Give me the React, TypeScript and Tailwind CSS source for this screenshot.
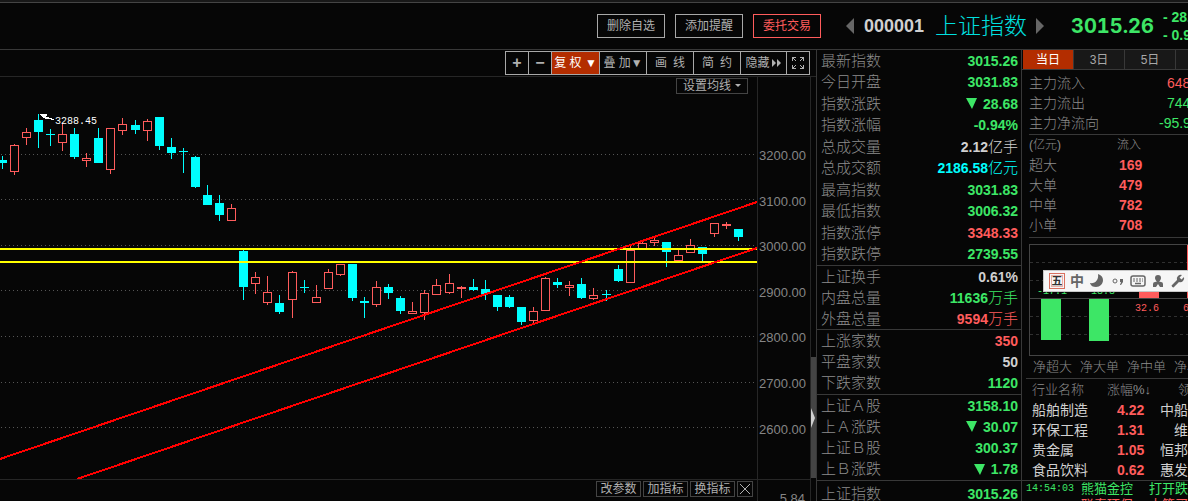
import React, { useState } from 'react';

type Candle = [up: boolean, top: number, bottom: number, high: number, low: number];

const candles: Candle[] = [
  [false, 160, 163, 156, 169],
  [true, 145, 172, 144, 175],
  [true, 132, 138, 128, 145],
  [false, 120, 132, 114, 148],
  [false, 134, 135, 129, 146],
  [true, 134, 143, 123, 151],
  [false, 134, 157, 128, 159],
  [true, 158, 161, 153, 167],
  [false, 138, 163, 128, 163],
  [true, 128, 170, 128, 174],
  [true, 124, 131, 118, 135],
  [false, 125, 130, 120, 134],
  [true, 121, 131, 119, 141],
  [false, 117, 146, 117, 150],
  [false, 147, 153, 138, 159],
  [false, 151, 152, 148, 173],
  [false, 157, 187, 156, 188],
  [false, 195, 205, 185, 205],
  [false, 203, 215, 195, 221],
  [true, 208, 221, 204, 221],
  [false, 251, 287, 250, 300],
  [true, 277, 284, 272, 294],
  [true, 292, 303, 276, 305],
  [false, 303, 312, 295, 314],
  [true, 272, 300, 271, 318],
  [false, 287, 288, 280, 293],
  [true, 297, 303, 285, 303],
  [true, 272, 289, 269, 289],
  [true, 264, 275, 264, 276],
  [false, 264, 298, 264, 301],
  [false, 301, 303, 297, 318],
  [true, 287, 305, 281, 307],
  [false, 287, 293, 284, 299],
  [false, 298, 311, 296, 314],
  [true, 311, 314, 302, 314],
  [true, 293, 313, 290, 320],
  [true, 285, 295, 279, 295],
  [true, 283, 293, 274, 294],
  [true, 287, 289, 286, 298],
  [false, 287, 290, 279, 291],
  [false, 289, 294, 280, 300],
  [false, 295, 307, 295, 311],
  [false, 297, 307, 295, 308],
  [false, 307, 322, 307, 325],
  [true, 311, 321, 307, 323],
  [true, 278, 311, 277, 311],
  [false, 282, 285, 278, 288],
  [true, 285, 288, 281, 296],
  [false, 284, 298, 278, 299],
  [true, 295, 299, 288, 300],
  [false, 294, 295, 290, 301],
  [false, 269, 281, 265, 282],
  [true, 250, 283, 246, 283],
  [true, 243, 249, 241, 249],
  [true, 240, 243, 237, 246],
  [false, 242, 252, 242, 267],
  [true, 255, 261, 250, 261],
  [true, 245, 253, 239, 253],
  [false, 247, 254, 247, 262],
  [true, 223, 234, 223, 237],
  [true, 224, 226, 222, 229],
  [false, 229, 237, 229, 241],
];

const gridLines = [154, 199, 245, 290, 336, 382, 427];
const prices = ['3200.00', '3100.00', '3000.00', '2900.00', '2800.00', '2700.00', '2600.00'];

const G = 'text-[#3de666]';
const R = 'text-[#ff5c5c]';
const W = 'text-[#d0d0d0]';
const C = 'text-[#00ffff]';

const quoteGroups = [
  {
    height: 'h-[216px]',
    rows: [
      ['最新指数', '3015.26', '', G],
      ['今日开盘', '3031.83', '', G],
      ['指数涨跌', '▼28.68', '', G],
      ['指数涨幅', '-0.94%', '', G],
      ['总成交量', '2.12', '亿手', W],
      ['总成交额', '2186.58', '亿元', C],
      ['最高指数', '3031.83', '', G],
      ['最低指数', '3006.32', '', G],
      ['指数涨停', '3348.33', '', R],
      ['指数跌停', '2739.55', '', G],
    ],
  },
  {
    height: 'h-16',
    rows: [
      ['上证换手', '0.61%', '', W],
      ['内盘总量', '11636', '万手', G],
      ['外盘总量', '9594', '万手', R],
    ],
  },
  {
    height: 'h-[65px]',
    rows: [
      ['上涨家数', '350', '', R],
      ['平盘家数', '50', '', W],
      ['下跌家数', '1120', '', G],
    ],
  },
  {
    height: 'h-[86px]',
    rows: [
      ['上证Ａ股', '3158.10', '', G],
      ['上Ａ涨跌', '▼30.07', '', G],
      ['上证Ｂ股', '300.37', '', G],
      ['上Ｂ涨跌', '▼1.78', '', G],
    ],
  },
  {
    height: 'h-[26px]',
    rows: [['上证指数', '3015.26', '', G]],
  },
];

const flows = [
  ['超大', '169'],
  ['大单', '479'],
  ['中单', '782'],
  ['小单', '708'],
];

const industries = [
  ['船舶制造', '4.22', '中船防务'],
  ['环保工程', '1.31', '维尔利'],
  ['贵金属', '1.05', '恒邦股份'],
  ['食品饮料', '0.62', '惠发食品'],
];

const Header = () => (
  <header className="flex h-[50px] shrink-0 items-center border-b border-[#383838]">
    <div className="flex flex-1 justify-end gap-[10px] pt-[2px]">
      <button className="h-6 w-[68px] border border-[#a8a8a8] text-xs text-[#b0b0b0]">删除自选</button>
      <button className="h-6 w-[68px] border border-[#a8a8a8] text-xs text-[#b0b0b0]">添加提醒</button>
      <button className="h-6 w-[68px] border border-[#ff5c5c] text-xs text-[#ff5c5c]">委托交易</button>
    </div>
    <div className="flex w-[367px] shrink-0 items-center overflow-hidden pt-[2px] pl-[25px] whitespace-nowrap">
      <button aria-label="上一个" className="mr-[10px] shrink-0">
        <svg width="8" height="16" fill="#666"><path d="M8 0V16L0 8z" /></svg>
      </button>
      <span className="w-[71px] shrink-0 text-lg font-bold text-[#d0d0d0]">000001</span>
      <h1 className="w-[101px] shrink-0 text-[23px] leading-7 font-light text-[#00e0e0]">上证指数</h1>
      <button aria-label="下一个" className="mr-[27px] shrink-0">
        <svg width="8" height="16" fill="#666"><path d="M0 0V16L8 8z" /></svg>
      </button>
      <span className="w-[92px] shrink-0 font-[Inter] text-xl font-bold text-[#3de666] tabular-nums">3015.26</span>
      <div className="shrink-0 text-sm leading-[18px] font-bold text-[#3de666]">
        <div>- 28.68</div>
        <div>- 0.94%</div>
      </div>
    </div>
  </header>
);

const Toolbar = () => (
  <div className="flex h-[27px] shrink-0 items-start justify-end border-b border-[#262626] pt-px pr-[6px]">
    <div className="flex h-6 divide-x divide-[#a8a8a8] border border-[#a8a8a8] text-xs text-[#b0b0b0] whitespace-nowrap">
      <button className="w-[23px] text-base leading-none font-bold">+</button>
      <button className="w-[23px] text-base leading-none font-bold">−</button>
      <button className="w-12 bg-[#b32d00] text-white">复 权 ▼</button>
      <button className="w-[47px]">叠 加▼</button>
      <button className="w-[47px]">画&ensp;线</button>
      <button className="w-[47px]">简&ensp;约</button>
      <button className="flex w-[46px] items-center justify-center gap-px">
        隐藏
        <svg width="11" height="8" fill="currentColor"><path d="M1 0L5 4L1 8zM6 0L10 4L6 8z" /></svg>
      </button>
      <button aria-label="全屏" className="flex w-[22px] items-center justify-center">
        <svg width="14" height="14" fill="none" stroke="currentColor" shapeRendering="crispEdges">
          <path d="M1.5 5V1.5H5M9 1.5H12.5V5M12.5 9V12.5H9M5 12.5H1.5V9M2 2L5 5M12 2L9 5M12 12L9 9M2 12L5 9" />
        </svg>
      </button>
    </div>
  </div>
);

const KLineChart = () => (
  <svg className="h-full w-full" viewBox="0 77 757 402" preserveAspectRatio="xMaxYMin meet" shapeRendering="crispEdges">
    {gridLines.map((y) => (
      <line key={y} x1="1" x2="757" y1={y + 0.5} y2={y + 0.5} stroke="#555" strokeDasharray="1 3" />
    ))}
    {candles.map(([up, top, bottom, high, low], i) => {
      const x = 2 + 12 * i + Math.floor((i + 2) / 13);
      const color = up ? '#ff5c5c' : '#00ffff';
      return (
        <g key={i}>
          <rect x={x} y={high} width="1" height={low - high} fill={color} />
          {up ? (
            <rect x={x - 4 + 0.5} y={top + 0.5} width="8" height={bottom - top - 1} fill="#060606" stroke={color} />
          ) : (
            <rect x={x - 4} y={top} width="9" height={bottom - top} fill={color} />
          )}
        </g>
      );
    })}
    <path d="M0 249H757M0 262H757" stroke="#ffff00" strokeWidth="2" />
    <path d="M0 459L757 202M77 479L757 248" stroke="#ff0000" strokeWidth="2" />
    <path d="M40 114H47L45 117L54 119.5L45 118L43 117z" fill="#fff" stroke="#fff" />
    <text x="55" y="124" fill="#fff" fontSize="10" fontFamily="Liberation Mono">3288.45</text>
  </svg>
);

const ChartPanel = () => (
  <div className="flex min-w-0 flex-1 flex-col">
    <Toolbar />
    <div className="flex min-h-0 flex-1">
      <div className="flex min-w-0 flex-1 flex-col border-r border-[#262626]">
        <div className="flex h-[403px] shrink-0 border-b border-[#262626]">
          <div className="relative min-w-0 flex-1">
            <KLineChart />
            <button className="absolute top-px right-[9px] flex h-4 w-[72px] items-center justify-center gap-1 border border-[#444] text-xs text-[#b0b0b0]">
              设置均线
              <svg width="6" height="4" fill="currentColor"><path d="M0 0H6L3 3z" /></svg>
            </button>
          </div>
          <div className="w-[53px] shrink-0 border-l border-[#262626] pt-[56px]">
            <div className="flex h-[319px] flex-col text-[13px] text-[#858585]">
              {prices.map((p) => (
                <div key={p} className="flex flex-1 items-center pl-px">{p}</div>
              ))}
            </div>
          </div>
        </div>
        <div className="flex flex-1 text-xs text-[#b0b0b0]">
          <div className="flex flex-1 items-start justify-end gap-[2px] pt-px pr-1">
            <button className="h-4 w-[45px] border border-[#444] leading-[14px]">改参数</button>
            <button className="h-4 w-[45px] border border-[#444] leading-[14px]">加指标</button>
            <button className="h-4 w-[45px] border border-[#444] leading-[14px]">换指标</button>
            <button aria-label="关闭" className="flex h-4 w-4 items-center justify-center border border-[#444]">
              <svg width="10" height="10" stroke="currentColor"><path d="M0 0L10 10M10 0L0 10" /></svg>
            </button>
          </div>
          <div className="w-[53px] border-l border-[#262626] pt-[10px] pr-[5px] text-right text-[13px] text-[#858585]">5.84</div>
        </div>
      </div>
      <div className="w-[5px] shrink-0 pt-[280px]">
        <div className="flex h-[121px] items-center bg-[#444]">
          <svg width="4" height="20" fill="#d0d0d0"><path d="M0 0L4 10L0 20z" /></svg>
        </div>
      </div>
    </div>
  </div>
);

const QuotePanel = () => (
  <dl className="w-[206px] shrink-0 border-x border-[#383838] text-[15px] whitespace-nowrap">
    {quoteGroups.map(({ height, rows }, i) => (
      <div key={i} className={`flex flex-col border-b border-[#383838] ${height}`}>
        {rows.map(([label, value, unit, color]) => (
          <div key={label} className="flex flex-1 items-center justify-between pr-[3px] pl-1 leading-5">
            <dt className="font-light text-[#8c8c8c]">{label}</dt>
            <dd className={`flex items-center ${color}`}>
              {value.startsWith('▼') && (
                <svg className="mr-[6px]" width="11" height="11" fill="currentColor"><path d="M0 0H11L6 11z" /></svg>
              )}
              <b className="text-sm leading-5">{value.replace('▼', '')}</b>
              <span className="font-light">{unit}</span>
            </dd>
          </div>
        ))}
      </div>
    ))}
  </dl>
);

const FlowBars = () => (
  <svg className="block" width="160" height="112" viewBox="1029 244 160 112" shapeRendering="crispEdges">
    <path d="M1188.5 244.5H1029.5V355.5H1188.5M1030 298.5H1188" fill="none" stroke="#444" />
    <path d="M1030 262.5H1188M1030 280.5H1188M1030 316.5H1188M1030 334.5H1188" stroke="#303030" strokeDasharray="3 3" />
    <rect x="1041" y="299" width="20" height="41" fill="#3de666" />
    <rect x="1089" y="299" width="20" height="42" fill="#3de666" />
    <rect x="1139" y="282" width="20" height="16" fill="#ff5c5c" />
    <rect x="1187" y="245" width="2" height="53" fill="#ff5c5c" />
    <g fontSize="10" fontFamily="Liberation Mono">
      <text x="1037" y="294" fill="#3de666">-17.1</text>
      <text x="1085" y="294" fill="#3de666">-18.8</text>
      <text x="1135" y="311" fill="#ff5c5c">32.6</text>
      <text x="1183" y="311" fill="#ff5c5c">63.5</text>
    </g>
  </svg>
);

const InputMethodBar = () => (
  <div className="absolute top-[220px] right-0 flex h-[22px] w-[145px] items-center border border-r-0 border-[#c8c8c8] bg-[#f6f6f6] pl-[5px] text-[#666]">
    <span className="flex h-4 w-4 items-center justify-center border border-[#d9705f] outline outline-[#e9b0a6] -outline-offset-3 text-[11px] leading-none font-bold text-[#333]">五</span>
    <span className="ml-[5px] w-[14px] text-sm leading-none font-bold">中</span>
    <svg className="ml-[6px]" width="14" height="14" fill="currentColor">
      <path d="M8 0C11 1 13 3 13 6C13 10 10 13 6 13C3 13 1 12 0 9C5 10 9 6 8 0z" />
    </svg>
    <svg className="ml-[8px]" width="12" height="14" fill="currentColor">
      <circle cx="3" cy="7" r="2" fill="none" stroke="currentColor" />
      <path d="M8 5H11V8L9 11H8L9 8H8z" />
    </svg>
    <svg className="ml-[6px]" width="16" height="12" fill="none" stroke="currentColor">
      <rect x="1" y="1" width="14" height="10" rx="2" strokeWidth="1.5" />
      <path d="M3 4H13M3 6H13" strokeDasharray="2 1" />
      <path d="M5 8.5H11" strokeWidth="1.500" />
    </svg>
    <svg className="ml-[6px]" width="12" height="14" fill="currentColor">
      <path d="M6 1C8 1 9 2 9 4C9 5 8 7 7 7.500L9 8Q11 8 11 10V13H8L6 10L4 13H1V10Q1 8 3 8L5 7.500C4 7 3 5 3 4C3 2 4 1 6 1z" />
    </svg>
    <svg className="ml-[7px]" width="14" height="14" fill="currentColor">
      <path d="M13 3L10.500 5.500L8.500 3.500L11 1A4 4 0 0 0 6 6L0.500 11.500Q1 13.500 2.500 13.500L8 8A4 4 0 0 0 13 3z" />
    </svg>
  </div>
);

const SidePanel = () => {
  const [tab, setTab] = useState('当日');

  return (
    <aside className="relative w-[166px] shrink-0 overflow-hidden text-sm whitespace-nowrap text-[#8c8c8c]">
      <div className="flex h-5 border-b border-[#383838] pl-px text-xs">
        {['当日', '3日', '5日', '10日'].map((t) => (
          <button
            key={t}
            onClick={() => setTab(t)}
            className={`w-[51px] shrink-0 border-r border-[#383838] ${t === tab ? 'bg-[#b32d00] text-white' : 'bg-[#181818] text-[#a8a8a8]'}`}
          >
            {t}
          </button>
        ))}
      </div>
      <div className="ml-[7px] border-b border-[#383838] pt-[3px] pb-px font-light leading-5">
        <div className="flex"><span className="w-[138px] shrink-0">主力流入</span><b className="text-[#ff5c5c]">648</b></div>
        <div className="flex"><span className="w-[138px] shrink-0">主力流出</span><b className="text-[#3de666]">744</b></div>
        <div className="flex"><span className="w-[130px] shrink-0">主力净流向</span><b className="text-[#3de666]">-95.9</b></div>
      </div>
      <table className="ml-[7px] w-[159px] font-light leading-5">
        <thead>
          <tr className="text-xs leading-5">
            <th className="w-[88px] text-left font-light">(亿元)</th>
            <th className="text-left font-light">流入</th>
          </tr>
        </thead>
        <tbody>
          {flows.map(([name, value]) => (
            <tr key={name}>
              <td>{name}</td>
              <td className="pl-[2px] font-bold text-[#ff5c5c]">{value}</td>
            </tr>
          ))}
        </tbody>
      </table>
      <div className="mt-[2px] ml-[7px] border-t border-[#383838] pt-[6px]">
        <FlowBars />
        <div className="flex h-[22px] items-center gap-2 pl-1 text-[13px] font-light">
          <span className="w-[39px] shrink-0">净超大</span>
          <span className="w-[39px] shrink-0">净大单</span>
          <span className="w-[39px] shrink-0">净中单</span>
          <span className="w-[39px] shrink-0">净小单</span>
        </div>
      </div>
      <div className="ml-1 border-t border-[#383838]">
        <table className="ml-[6px] w-[190px] table-fixed leading-5">
          <thead>
            <tr className="h-[21px] text-[13px]">
              <th className="w-[75px] text-left font-light">行业名称</th>
              <th className="w-[53px] text-left font-light">涨幅%↓</th>
              <th className="w-[62px] pl-[18px] text-left font-light">领涨股</th>
            </tr>
          </thead>
          <tbody>
            {industries.map(([name, change, leader]) => (
              <tr key={name}>
                <td className="text-[#d0d0d0]">{name}</td>
                <td className="pl-[10px] font-bold text-[#ff5c5c]">{change}</td>
                <td className="pr-[6px] text-right text-[#d0d0d0]">{leader}</td>
              </tr>
            ))}
          </tbody>
        </table>
      </div>
      <div className="border-t border-[#383838] pl-1 text-[13px] leading-4 text-[#3de666]">
        <div className="flex">
          <span className="w-[55px] shrink-0 font-[Liberation_Mono] text-[10px] leading-4">14:54:03</span>
          <span className="w-[68px] shrink-0">熊猫金控</span>
          <span>打开跌停</span>
        </div>
        <div className="flex pl-[55px] text-[#ff5c5c]">
          <span className="w-[68px] shrink-0">联泰环保</span>
          <span>大笔买入</span>
        </div>
      </div>
      <InputMethodBar />
    </aside>
  );
};

const App = () => (
  <div className="flex h-screen flex-col overflow-hidden bg-[#060606] font-['Liberation_Sans','Noto_Sans_CJK_SC',sans-serif]">
    <div className="h-[3px] shrink-0 border-b border-[#444] bg-[#181818]" />
    <div className="-mt-[3px] flex min-h-0 flex-1 flex-col">
      <Header />
      <main className="flex min-h-0 flex-1">
        <ChartPanel />
        <QuotePanel />
        <SidePanel />
      </main>
    </div>
  </div>
);

export default App;
